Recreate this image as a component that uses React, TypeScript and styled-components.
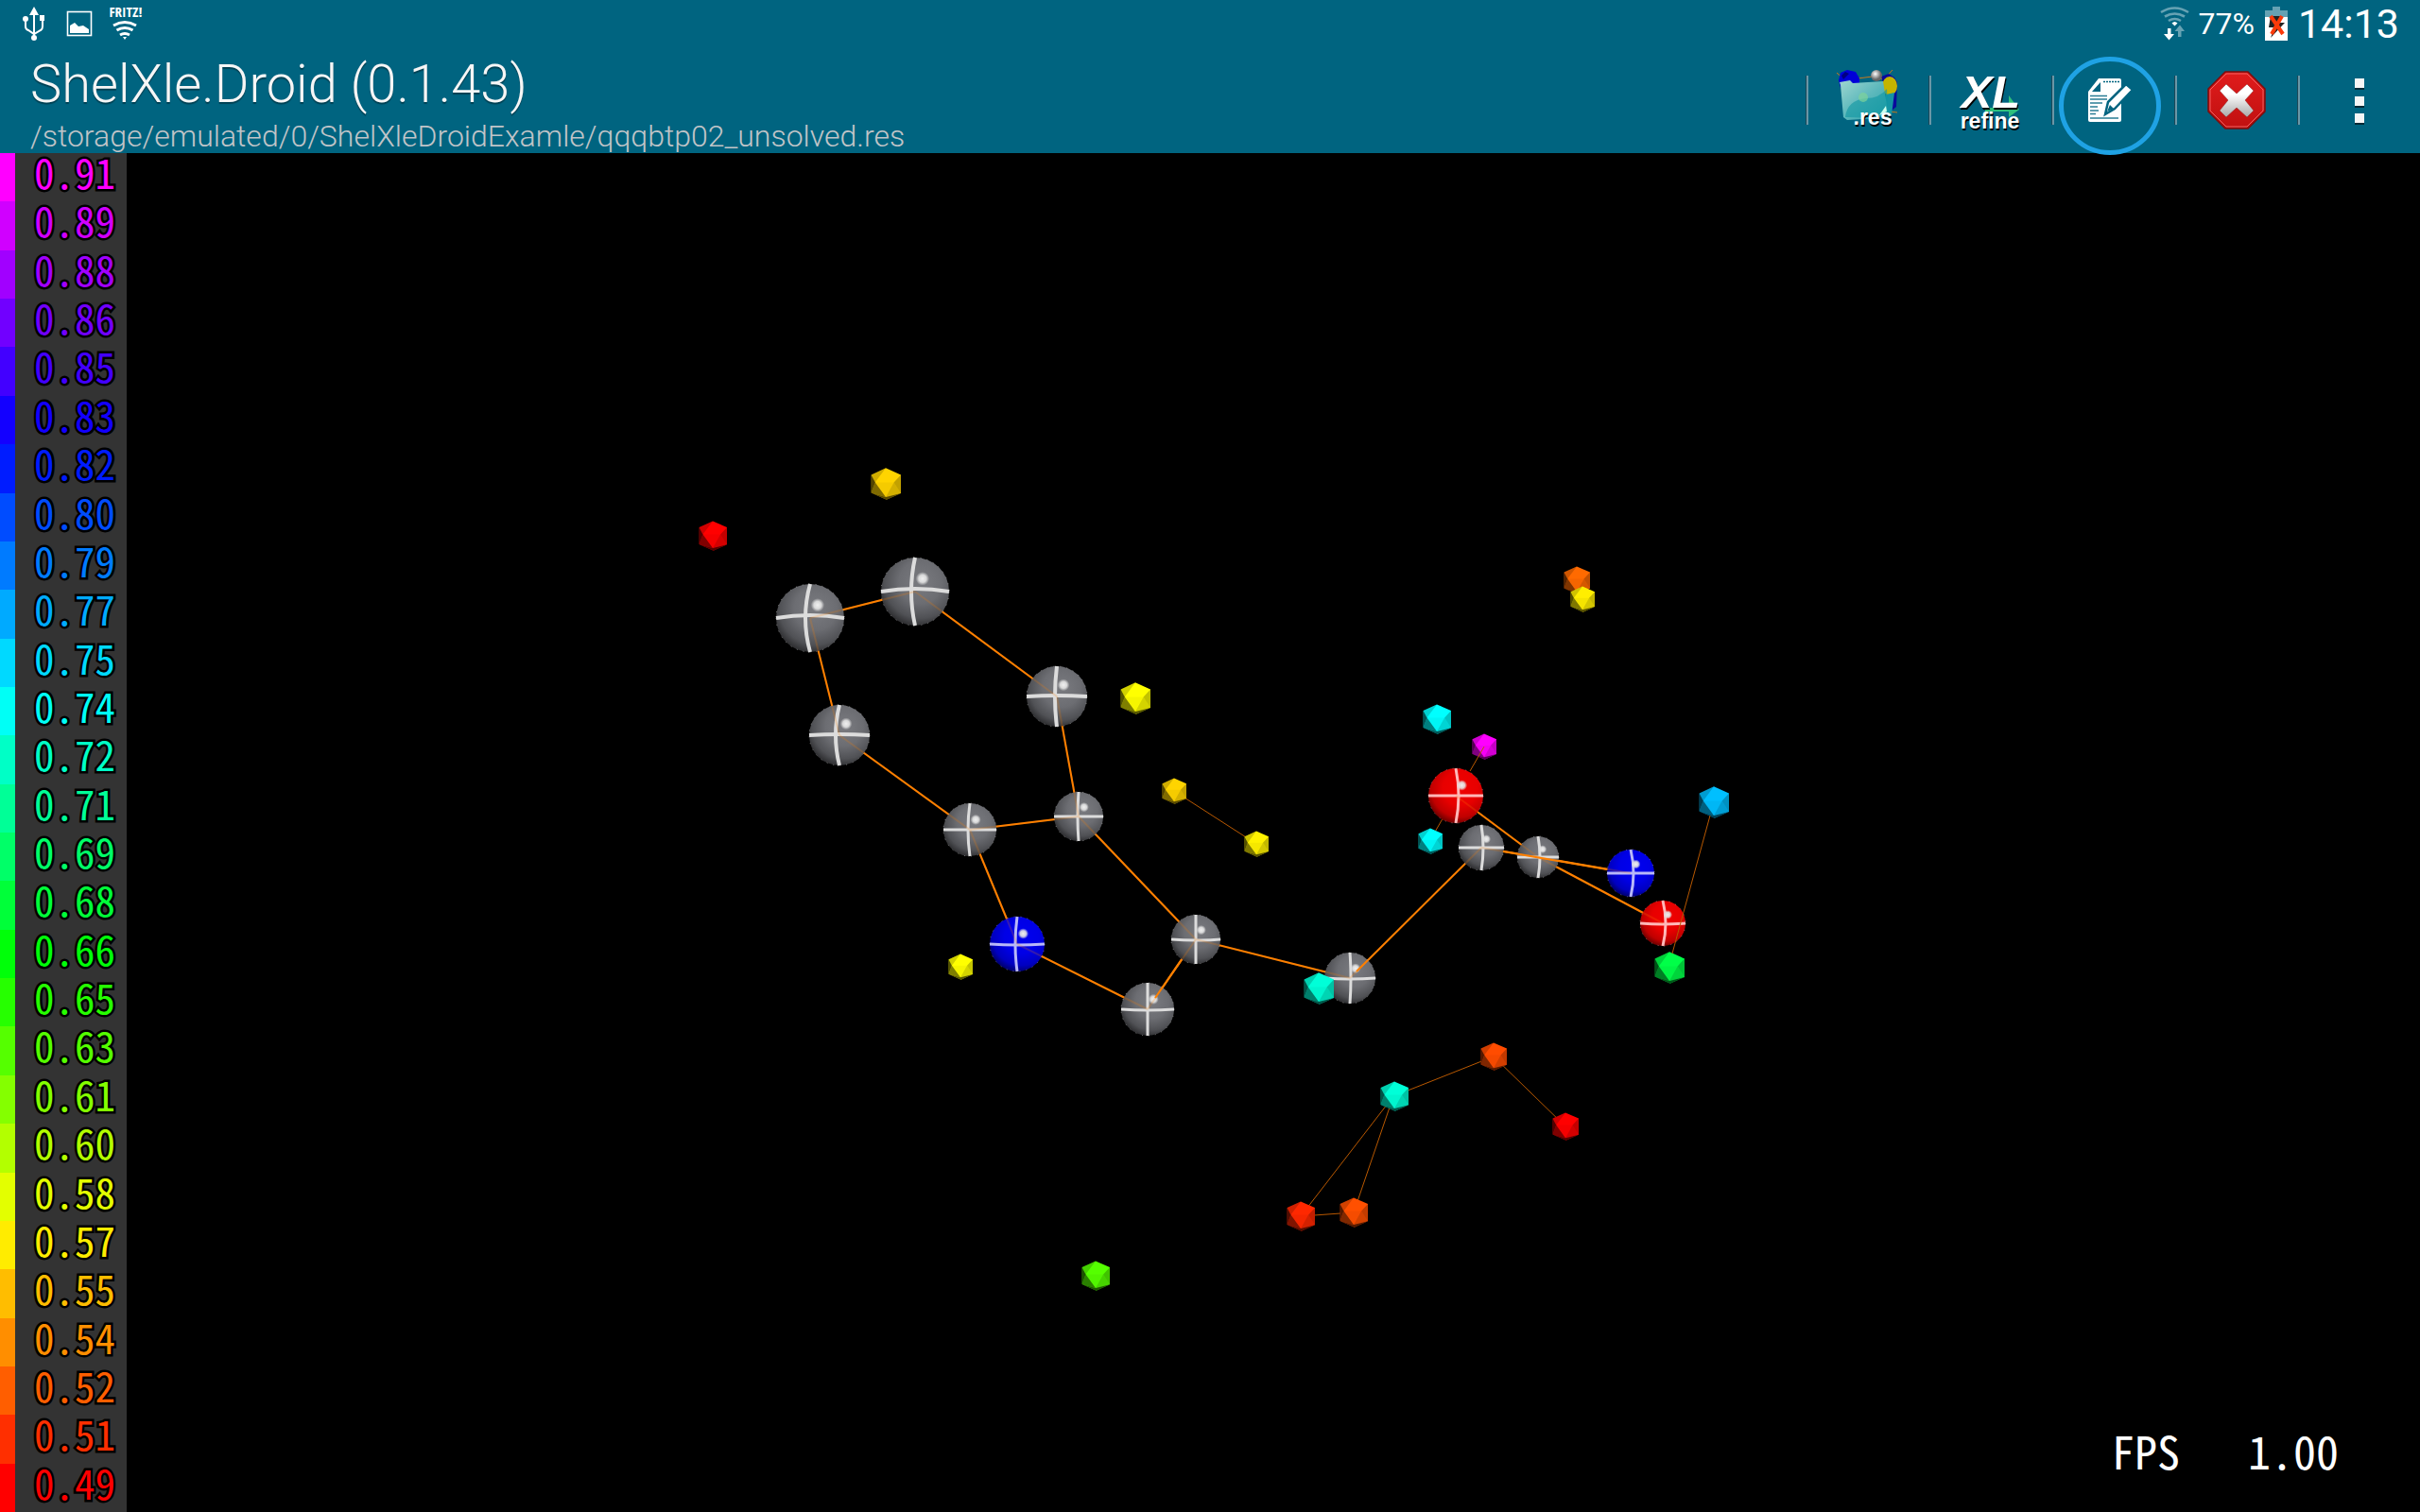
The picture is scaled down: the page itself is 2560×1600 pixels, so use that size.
import React from "react";
import styled, { createGlobalStyle } from "styled-components";

const GlobalStyle = createGlobalStyle`
  * { box-sizing: border-box; }
  body { margin: 0; background: #000; font-family: Roboto, "Liberation Sans", sans-serif; }
`;

const Page = styled.div`
  display: flex;
  flex-direction: column;
  min-height: 100vh;
  background: #000;
  color: #fff;
`;

const Header = styled.header`
  position: relative;
  z-index: 1;
  background: #006480;
`;

const StatusBar = styled.div`
  display: flex;
  justify-content: space-between;
  align-items: center;
  height: 50px;
  padding: 0 22px;
`;

const StatusGroup = styled.div<{ $gap: number }>`
  display: flex;
  align-items: center;
  gap: ${(p) => p.$gap}px;
`;

const Battery = styled.span`
  font-size: 32px;
  line-height: 50px;
`;

const Clock = styled.time`
  font-size: 43px;
  line-height: 50px;
`;

const ActionBar = styled.div`
  display: flex;
  justify-content: space-between;
  height: 112px;
  padding-left: 32px;
`;

const Titles = styled.div`
  display: flex;
  flex-direction: column;
`;

const Title = styled.h1`
  margin: 0;
  font-size: 56px;
  font-weight: 300;
  line-height: 78px;
  color: #f6f6f6;
  text-shadow: 0 2px 1px rgba(0, 0, 0, 0.35);
`;

const Path = styled.p`
  margin: 0;
  font-size: 32px;
  font-weight: 300;
  line-height: 32px;
  color: #c0c4c8;
`;

const Actions = styled.nav`
  display: flex;
  align-items: flex-start;
  padding-top: 10px;
`;

const ActionButton = styled.button`
  position: relative;
  display: flex;
  justify-content: center;
  align-items: flex-start;
  width: 130px;
  height: 102px;
  padding: 0;
  border: 0;
  background: none;
  cursor: pointer;

  &::before {
    content: "";
    position: absolute;
    left: 1px;
    top: 20px;
    width: 2px;
    height: 52px;
    background: #6a96a6;
    box-shadow: -1px 0 0 #1d4858;
  }
`;

const Icon = styled.svg`
  display: block;
  flex: none;
  overflow: visible;
`;

const Caption = styled.text`
  font-family: "Liberation Sans", Arial, sans-serif;
  font-weight: 700;
  fill: #fff;
  text-anchor: middle;
  text-shadow: 1px 2px 0 #000;
`;

const Main = styled.main`
  display: flex;
  flex: 1;
`;

const Legend = styled.ol`
  display: flex;
  flex-direction: column;
  width: 134px;
  margin: 0;
  padding: 0;
  list-style: none;
  background: #333;
`;

const LegendRow = styled.li`
  display: flex;
  flex: 1;
  gap: 20px;
`;

const Swatch = styled.span`
  width: 16px;
`;

const LegendValue = styled.span`
  font-family: "Noto Sans Mono CJK JP", "DejaVu Sans Mono", monospace;
  font-size: 43px;
  line-height: 38px;
  -webkit-text-stroke: 5px #000;
  paint-order: stroke fill;
`;

const Viewer = styled.section`
  position: relative;
  display: flex;
  flex: 1;
`;

const Scene = styled.svg`
  display: block;
  width: 100%;
`;

const Fps = styled.output`
  position: absolute;
  right: 86px;
  bottom: 32px;
  font-family: "Noto Sans Mono CJK JP", "DejaVu Sans Mono", monospace;
  font-size: 48px;
  line-height: 68px;
  white-space: pre;
`;

/* ---------- legend ---------- */

const levels = [
  "0.91", "0.89", "0.88", "0.86", "0.85", "0.83", "0.82", "0.80", "0.79", "0.77",
  "0.75", "0.74", "0.72", "0.71", "0.69", "0.68", "0.66", "0.65", "0.63", "0.61",
  "0.60", "0.58", "0.57", "0.55", "0.54", "0.52", "0.51", "0.49",
];

const levelColor = (i: number) => `hsl(${300 - (300 * i) / (levels.length - 1)} 100% 50%)`;

/* ---------- molecule ---------- */

type Element = "C" | "N" | "O";
type Atom = { el: Element; x: number; y: number; r: number; dx: number; dy: number };

const atoms: Record<string, Atom> = {
  C1: { el: "C", x: 968, y: 626, r: 36, dx: -4, dy: -3 },
  C2: { el: "C", x: 857, y: 654, r: 36, dx: -5, dy: -3 },
  C3: { el: "C", x: 888, y: 778, r: 32, dx: -4, dy: -1 },
  C4: { el: "C", x: 1118, y: 737, r: 32, dx: -2, dy: -1 },
  C5: { el: "C", x: 1026, y: 878, r: 28, dx: -2, dy: 0 },
  C6: { el: "C", x: 1141, y: 864, r: 26, dx: -1, dy: 0 },
  N1: { el: "N", x: 1076, y: 999, r: 29, dx: -2, dy: 1 },
  C7: { el: "C", x: 1265, y: 994, r: 26, dx: 0, dy: 1 },
  C8: { el: "C", x: 1214, y: 1068, r: 28, dx: 0, dy: 1 },
  C9: { el: "C", x: 1428, y: 1035, r: 27, dx: 1, dy: 1 },
  C10: { el: "C", x: 1567, y: 897, r: 24, dx: 2, dy: 0 },
  C11: { el: "C", x: 1627, y: 907, r: 22, dx: 2, dy: 0 },
  O1: { el: "O", x: 1540, y: 842, r: 29, dx: 3, dy: 0 },
  N2: { el: "N", x: 1725, y: 924, r: 25, dx: 3, dy: 0 },
  O2: { el: "O", x: 1759, y: 977, r: 24, dx: 3, dy: 1 },
};

const bonds = [
  ["C1", "C2"], ["C2", "C3"], ["C3", "C5"], ["C5", "C6"], ["C6", "C4"], ["C4", "C1"],
  ["C5", "N1"], ["N1", "C8"], ["C8", "C7"], ["C7", "C6"], ["C7", "C9"], ["C9", "C10"],
  ["C10", "C11"], ["C11", "N2"], ["C11", "O1"], ["C11", "O2"],
];

const frontBonds = [
  [1222, 1056, 1250, 1015],
  [1435, 1028, 1447, 1016],
  [1590, 901, 1700, 920],
];

const ring: Record<Element, string> = { C: "#dcdcdc", N: "#b8b8f8", O: "#ffb8b8" };
const body: Record<Element, string[]> = {
  C: ["#7a7b80", "#6c6d72", "#505155", "#222224"],
  N: ["#0000f0", "#0000e6", "#0000c0", "#000050"],
  O: ["#f00000", "#e80000", "#c00000", "#540000"],
};

const thinLines = [
  [1242, 837, 1329, 893],
  [1540, 842, 1513, 889],
  [1474, 1160, 1580, 1118],
  [1580, 1118, 1656, 1192],
  [1474, 1160, 1376, 1287],
  [1474, 1160, 1432, 1283],
  [1376, 1287, 1432, 1283],
];

const thinFront = [
  [1570, 790, 1555, 816],
  [1809, 863, 1769, 1009],
];

const peaks: [number, number, number, string][] = [
  [754, 567, 15, "#ff0000"],
  [937, 512, 16, "#ffd400"],
  [1201, 739, 16, "#ffff00"],
  [1242, 837, 13, "#ffd400"],
  [1329, 893, 13, "#fff200"],
  [1016, 1023, 13, "#ffff00"],
  [1395, 1046, 16, "#00ffd8"],
  [1520, 761, 15, "#00ffff"],
  [1570, 790, 13, "#ff00ff"],
  [1513, 890, 13, "#00ffff"],
  [1813, 849, 16, "#00bfff"],
  [1766, 1024, 16, "#00ff48"],
  [1475, 1160, 15, "#00ffd8"],
  [1580, 1118, 14, "#ff4c00"],
  [1656, 1192, 14, "#ff0000"],
  [1376, 1287, 15, "#ff2800"],
  [1432, 1283, 15, "#ff5000"],
  [1668, 614, 14, "#ff6a00"],
  [1674, 634, 13, "#ffee00"],
  [1159, 1350, 15, "#55ff00"],
];

function Sphere({ el, x, y, r, dx, dy }: Atom) {
  const w = r > 30 ? 4 : 3;
  return (
    <g>
      <circle cx={x} cy={y} r={r} fill={`url(#body-${el})`} />
      <g fill="none" stroke={ring[el]} strokeWidth={w}>
        <path d={`M${x - r} ${y}Q${x} ${y + 2 * dy} ${x + r} ${y}`} />
        <path d={`M${x} ${y - r}Q${x + 2 * dx} ${y} ${x} ${y + r}`} />
      </g>
      <circle
        cx={x}
        cy={y}
        r={r}
        fill="none"
        stroke={ring[el]}
        strokeWidth={1}
        strokeDasharray="1 6"
        opacity={0.5}
      />
      <circle cx={x + r * 0.22} cy={y - r * 0.38} r={r * 0.2} fill="url(#shine)" />
    </g>
  );
}

function Peak({ x, y, r, color }: { x: number; y: number; r: number; color: string }) {
  return (
    <g transform={`translate(${x} ${y}) scale(${r})`}>
      <path d="M0-1.04 1-.6V.62L.05 1.05-.96.6V-.6Z" fill={color} />
      <path d="M-.96-.6 0-1.04-.7-.1Z" opacity={0.18} />
      <path d="M-.96-.6-.7-.1-.96.6Z" opacity={0.68} />
      <path d="M-.96.6-.7-.1 0 .87Z" opacity={0.5} />
      <path d="M.54-.1 1-.6V.62Z" opacity={0.24} />
      <path d="M.54-.1 1 .62 0 .87Z" opacity={0.17} />
      <path d="M-.7-.1H.54L0 .87Z" opacity={0.04} />
      <path d="M-.96.6 0 .87 1 .62.05 1.05Z" opacity={0.66} />
    </g>
  );
}

function Molecule() {
  return (
    <Scene viewBox="134 162 2426 1438" role="img" aria-label="Molecule">
      <defs>
        {(Object.keys(body) as Element[]).map((el) => (
          <radialGradient key={el} id={`body-${el}`} cx="0.58" cy="0.36" r="0.7">
            <stop offset="0" stopColor={body[el][0]} />
            <stop offset="0.45" stopColor={body[el][1]} />
            <stop offset="0.76" stopColor={body[el][2]} />
            <stop offset="1" stopColor={body[el][3]} />
          </radialGradient>
        ))}
        <radialGradient id="shine">
          <stop offset="0" stopColor="#f0f0f0" />
          <stop offset="0.55" stopColor="#e4e4e4" stopOpacity="0.9" />
          <stop offset="1" stopColor="#ddd" stopOpacity="0" />
        </radialGradient>
      </defs>
      <g stroke="#b85800" strokeWidth={1}>
        {thinLines.map(([x1, y1, x2, y2], i) => (
          <line key={i} x1={x1} y1={y1} x2={x2} y2={y2} />
        ))}
      </g>
      <g stroke="#ff8000" strokeWidth={2}>
        {bonds.map(([a, b]) => (
          <line key={a + b} x1={atoms[a].x} y1={atoms[a].y} x2={atoms[b].x} y2={atoms[b].y} />
        ))}
      </g>
      {Object.entries(atoms).map(([name, atom]) => (
        <Sphere key={name} {...atom} />
      ))}
      <g stroke="#ff8000" strokeWidth={2} opacity={0.2}>
        {bonds.map(([a, b]) => (
          <line key={a + b} x1={atoms[a].x} y1={atoms[a].y} x2={atoms[b].x} y2={atoms[b].y} />
        ))}
      </g>
      <g stroke="#ff8000" strokeWidth={2}>
        {frontBonds.map(([x1, y1, x2, y2], i) => (
          <line key={i} x1={x1} y1={y1} x2={x2} y2={y2} />
        ))}
      </g>
      {peaks.map(([x, y, r, color]) => (
        <Peak key={`${x}-${y}`} x={x} y={y} r={r} color={color} />
      ))}
      <g stroke="#b85800" strokeWidth={1}>
        {thinFront.map(([x1, y1, x2, y2], i) => (
          <line key={i} x1={x1} y1={y1} x2={x2} y2={y2} />
        ))}
      </g>
    </Scene>
  );
}

/* ---------- status icons ---------- */

const UsbIcon = () => (
  <Icon width="28" height="40" viewBox="22 5 28 40" fill="#fff" aria-hidden="true">
    <path d="M36 7l5 9h-10z" />
    <path d="M36 14v26M27 23v5q0 3 3 4l6 4 7-4q2-1 2-4v-6" fill="none" stroke="#fff" strokeWidth="2" />
    <circle cx="27" cy="20" r="3" />
    <rect x="42" y="16" width="5" height="6" />
    <circle cx="36" cy="40" r="3" />
  </Icon>
);

const ImageIcon = () => (
  <Icon width="28" height="30" viewBox="70 10 28 30" aria-hidden="true">
    <rect x="71.5" y="12.5" width="25" height="25" fill="none" stroke="#fff" strokeWidth="1.6" />
    <path d="M74 35v-8l5-3 4 4 5-1 6 4v4z" fill="#fff" />
  </Icon>
);

const FritzIcon = () => (
  <Icon width="30" height="40" viewBox="119 5 30 40" aria-hidden="true">
    <text
      x="134"
      y="18"
      textAnchor="middle"
      fontFamily="Open Sans Condensed, Lato, sans-serif"
      fontWeight="800"
      fontSize="15"
      fill="#fff"
    >
      FRITZ!
    </text>
    <g fill="none" stroke="#fff" strokeWidth="3">
      <path d="M121 27q12-7 24 0" />
      <path d="M124.500 32q8.500-5 17 0" />
      <path d="M128 37q5-3 10 0" />
    </g>
    <path d="M131 39h4l-2 3z" fill="#fff" />
  </Icon>
);

const WifiIcon = () => (
  <Icon width="30" height="36" viewBox="2287 8 30 36" fill="none" aria-hidden="true">
    <g stroke="#66a2b3" strokeWidth="2.600">
      <path d="M2288 14q14.500-9 29 0" />
      <path d="M2292 18.500q10.500-6 21 0" />
      <path d="M2296 23q6.500-4 13 0" />
    </g>
    <path d="M2299.500 25.500q3-3 6 0l-3 3z" fill="#fff" />
    <path d="M2295 31h3.500v6h3.500l-5.500 6.500-5.500-6.500h4z" fill="#fff" />
    <path d="M2306 40h3.500v-6h3.500l-5-6.500-5.500 6.500h3.500z" fill="#66a2b3" />
  </Icon>
);

const BatteryIcon = () => (
  <Icon width="24" height="36" viewBox="2396 6 24 36" aria-hidden="true">
    <path d="M2404 6h8v4h8v8h-24v-8h8z" fill="#66a2b3" />
    <path d="M2396 17h24v25h-24z" fill="#fff" />
    <path d="M2402 16h10l-2 7h7l-15 16 4-11h-6z" fill="#222" />
    <path d="M2402 16l13 19M2414 16l-11 19" stroke="#fa3a0a" strokeWidth="4" />
  </Icon>
);

/* ---------- toolbar icons ---------- */

const OpenIcon = () => (
  <Icon width="66" height="102" viewBox="1943 60 66 102" aria-hidden="true">
    <defs>
      <linearGradient id="folder" x1="0" y1="0" x2="1" y2="1">
        <stop offset="0" stopColor="#9fd6cf" />
        <stop offset="0.5" stopColor="#5cb8bc" />
        <stop offset="1" stopColor="#26a0aa" />
      </linearGradient>
      <radialGradient id="pearl" cx="0.4" cy="0.35">
        <stop offset="0" stopColor="#fff" />
        <stop offset="1" stopColor="#666" />
      </radialGradient>
    </defs>
    <path d="M1944 77l7 6M1966 83l16-2 12 3 9-10M2000 118l8 1" stroke="#c8791c" fill="none" />
    <path d="M1946 85l2-8 7-3 9 2 4 7v8l-20 2z" fill="#0000d8" />
    <path d="M1949 80l4-4 4 2-6 6z" fill="#000080" />
    <path d="M1991 81l8-3 6 4 3 5-1 26-5 4z" fill="#0a0a9c" />
    <ellipse cx="2000" cy="91" rx="8" ry="10" fill="#c4b400" />
    <circle cx="1986" cy="80" r="6" fill="url(#pearl)" />
    <path d="M1996 100l9-2-3 24-8 4z" fill="#1494a4" />
    <path d="M1948 90l-1-3 11-2 3 3 32-2 5 32-10 7-33 2-4-3z" fill="url(#folder)" />
    <path d="M1953 124q2-18 22-20 14 0 22-10l1 24-10 7z" fill="#0f96a2" opacity="0.6" />
    <circle cx="1972" cy="103" r="5" fill="#7ed39a" opacity="0.7" />
    <path d="M1989 122l7-10 1 6z" fill="#cfe" />
    <Caption x="1982" y="132" fontSize="23">.res</Caption>
  </Icon>
);

const RefineIcon = () => (
  <Icon width="66" height="102" viewBox="2073 60 66 102" aria-hidden="true">
    <path d="M2101 114h25v-13l11 15-11 8v-6h-25z" fill="#2fbf7c" />
    <Caption x="2107" y="114" fontSize="49" fontStyle="italic">XL</Caption>
    <Caption x="2106" y="136" fontSize="23">refine</Caption>
  </Icon>
);

const EditIcon = () => (
  <Icon width="108" height="104" viewBox="2181 60 108 104" aria-hidden="true">
    <ellipse cx="2232" cy="112" rx="51.500" ry="49.500" fill="none" stroke="#1fa2e4" strokeWidth="5" />
    <path d="M2220 83h22q2 0 2 2v42q0 2-2 2h-31q-2 0-2-2V97z" fill="#fff" />
    <path d="M2222 87v10h-9z" fill="#006480" />
    <path d="M2225 86.500h17" stroke="#006480" strokeWidth="1.500" strokeDasharray="2 1" />
    <path
      d="M2211 101.500h18M2211 105h18M2211 109h13M2211 113h8M2211 117h9M2211 120.500h6M2211 125h30"
      stroke="#2a7d95"
      strokeWidth="1.500"
    />
    <path d="M2227 121l3-13 19-19 7 6-19 20z" fill="#fff" stroke="#006480" strokeWidth="2.500" />
    <path d="M2229 118l3-7 4 4z" fill="#006480" />
  </Icon>
);

const CloseIcon = () => (
  <Icon width="62" height="102" viewBox="2334 60 62 102" aria-hidden="true">
    <defs>
      <linearGradient id="stop" x2="0" y2="1">
        <stop offset="0" stopColor="#e01c1c" />
        <stop offset="1" stopColor="#c01010" />
      </linearGradient>
      <linearGradient id="cross" x2="0" y2="1">
        <stop offset="0.3" stopColor="#fff" />
        <stop offset="1" stopColor="#a8a8a8" />
      </linearGradient>
    </defs>
    <path d="M2354 76h24l18 18v24l-18 18h-24l-18-18v-24z" fill="url(#stop)" stroke="#7c0c0c" strokeWidth="1.500" />
    <path d="M2355 78h22l17 17v22l-17 17h-22l-17-17v-22z" fill="none" stroke="#f06060" strokeWidth="1" />
    <path
      d="M2355 89l11 10 11-10 7 7-9 10 9 11-7 7-11-10-11 10-7-7 9-11-9-10z"
      fill="url(#cross)"
      stroke="#8c2020"
      strokeWidth="0.500"
    />
  </Icon>
);

const MoreIcon = () => (
  <Icon width="12" height="102" viewBox="2489 60 12 102" aria-hidden="true">
    {[83, 102, 120].map((y) => (
      <g key={y}>
        <rect x="2491" y={y + 2} width="10" height="10" fill="#042a36" />
        <rect x="2491" y={y} width="10" height="10" fill="#f6f6f6" />
      </g>
    ))}
  </Icon>
);

const actions = [
  { label: "Open .res file", Glyph: OpenIcon },
  { label: "Refine", Glyph: RefineIcon },
  { label: "Edit", Glyph: EditIcon },
  { label: "Close", Glyph: CloseIcon },
  { label: "More options", Glyph: MoreIcon },
];

export default function App() {
  return (
    <Page>
      <GlobalStyle />
      <Header>
        <StatusBar>
          <StatusGroup $gap={20}>
            <UsbIcon />
            <ImageIcon />
            <FritzIcon />
          </StatusGroup>
          <StatusGroup $gap={11}>
            <WifiIcon />
            <Battery>77%</Battery>
            <BatteryIcon />
            <Clock>14:13</Clock>
          </StatusGroup>
        </StatusBar>
        <ActionBar>
          <Titles>
            <Title>ShelXle.Droid (0.1.43)</Title>
            <Path>/storage/emulated/0/ShelXleDroidExamle/qqqbtp02_unsolved.res</Path>
          </Titles>
          <Actions>
            {actions.map(({ label, Glyph }) => (
              <ActionButton key={label} type="button" aria-label={label}>
                <Glyph />
              </ActionButton>
            ))}
          </Actions>
        </ActionBar>
      </Header>
      <Main>
        <Legend>
          {levels.map((value, i) => (
            <LegendRow key={value}>
              <Swatch style={{ background: levelColor(i) }} />
              <LegendValue style={{ color: levelColor(i) }}>{value}</LegendValue>
            </LegendRow>
          ))}
        </Legend>
        <Viewer>
          <Molecule />
          <Fps>FPS   1.00</Fps>
        </Viewer>
      </Main>
    </Page>
  );
}
